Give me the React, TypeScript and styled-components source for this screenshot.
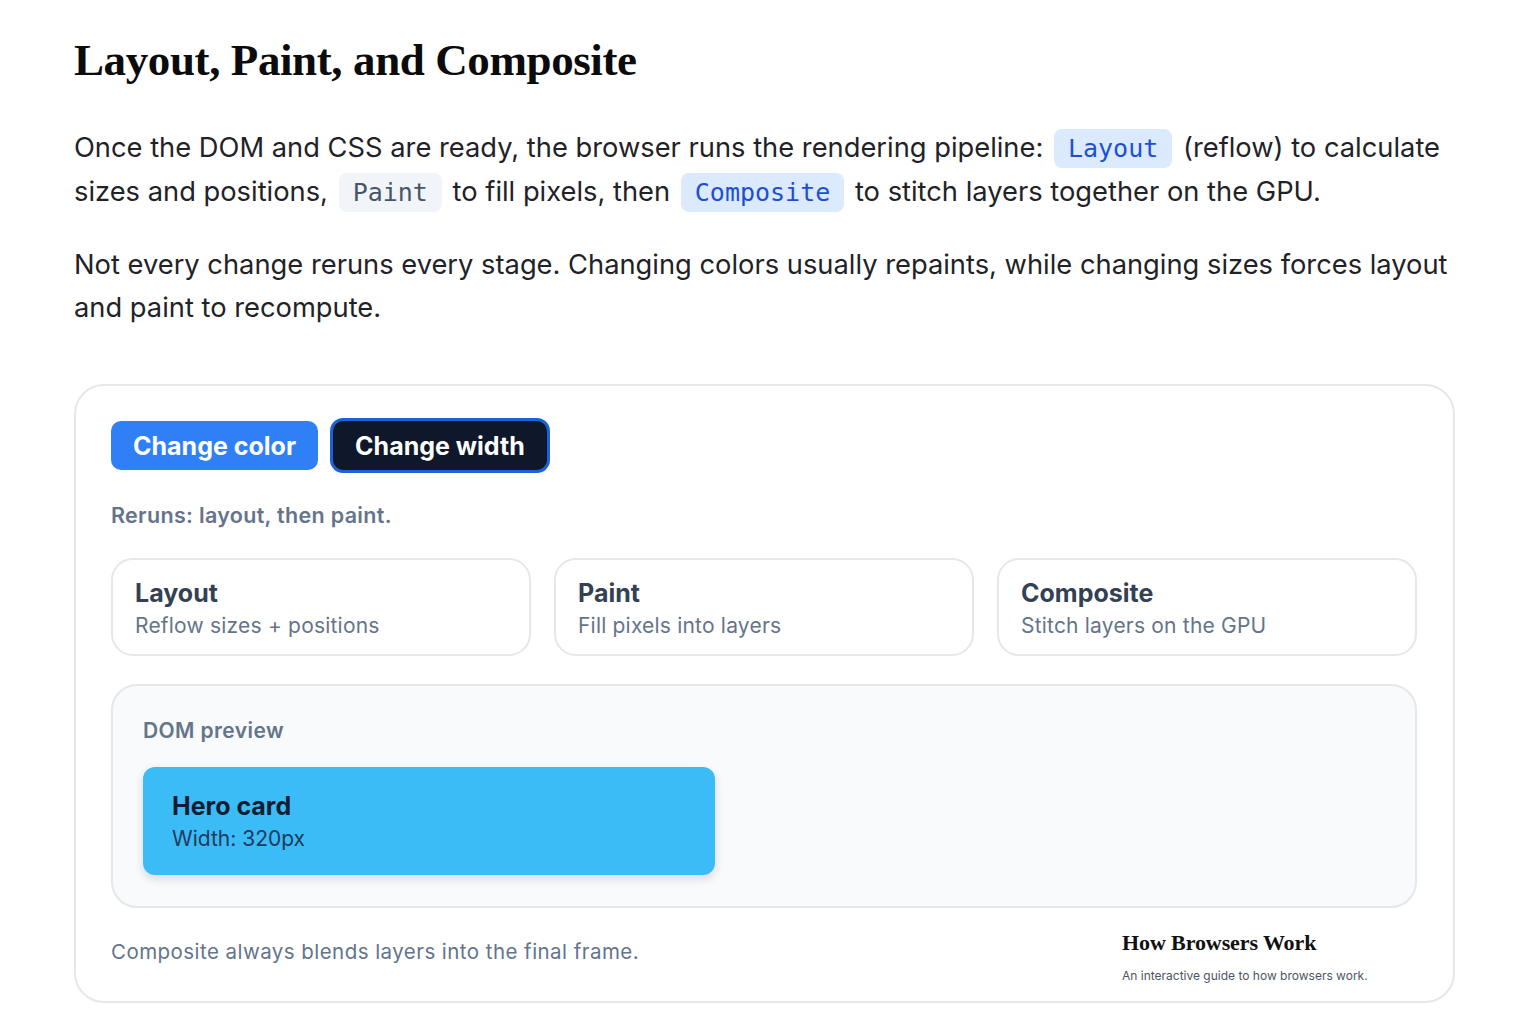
import React from "react";
import styled, { createGlobalStyle } from "styled-components";

const Global = createGlobalStyle`
  html, body { margin: 0; padding: 0; background: #ffffff; }
  body { font-family: Inter, "Noto Sans", sans-serif; color: #111827; }
`;

const Page = styled.main`
  width: 1381px;
  padding: 28px 0 0 74px;
`;

const Title = styled.h1`
  margin: 0 0 34px 0;
  font-family: "Liberation Serif", "DejaVu Serif", serif;
  font-weight: 700;
  font-size: 45px;
  line-height: 64px;
  letter-spacing: -0.4px;
  color: #0b0b0b;
`;

const Para = styled.p`
  margin: 0 0 29px 0;
  font-size: 27.3px;
  line-height: 43px;
  color: #1f2328;
`;

const Code = styled.code<{ $tone: "blue" | "gray" }>`
  font-family: "DejaVu Sans Mono", "Liberation Mono", monospace;
  font-size: 25px;
  padding: 5px 14px;
  margin: 0 3px;
  border-radius: 8px;
  background: ${(p) => (p.$tone === "blue" ? "#dbeafe" : "#f1f5f9")};
  color: ${(p) => (p.$tone === "blue" ? "#1d4ed8" : "#475569")};
`;

const Card = styled.section`
  margin-top: 55px;
  border: 2px solid #e5e7eb;
  border-radius: 30px;
  padding: 35px 36px 17px 35px;
  display: flex;
  flex-direction: column;
`;

const ButtonRow = styled.div`
  display: flex;
  gap: 15px;
  align-items: center;
`;

const Button = styled.button<{ $active?: boolean }>`
  font-family: Inter, sans-serif;
  font-weight: 700;
  font-size: 25px;
  height: 49px;
  padding: 0 22px;
  border-radius: 10px;
  border: none;
  color: #ffffff;
  background: ${(p) => (p.$active ? "#0f172a" : "#2f80f7")};
  box-shadow: ${(p) => (p.$active ? "0 0 0 3px #1d63d8" : "none")};
  cursor: pointer;
`;

const Status = styled.div`
  margin-top: 31px;
  font-size: 21.5px;
  font-weight: 600;
  letter-spacing: 0.32px;
  color: #64748b;
  line-height: 28px;
`;

const Stages = styled.div`
  margin-top: 29px;
  display: grid;
  grid-template-columns: repeat(3, 1fr);
  gap: 23px;
`;

const Stage = styled.div`
  border: 2px solid #e5e7eb;
  border-radius: 22px;
  padding: 17px 22px 13px;
  display: flex;
  flex-direction: column;
  gap: 2px;
`;

const StageTitle = styled.div`
  font-size: 25px;
  font-weight: 700;
  color: #334155;
  line-height: 32px;
`;

const StageSub = styled.div`
  font-size: 21px;
  color: #64748b;
  line-height: 30px;
  letter-spacing: 0.2px;
`;

const Preview = styled.div`
  margin-top: 28px;
  background: #f8fafc;
  border: 2px solid #e5e7eb;
  border-radius: 26px;
  padding: 28px 30px 31px;
  display: flex;
  flex-direction: column;
  align-items: flex-start;
`;

const PreviewLabel = styled.div`
  font-size: 21px;
  font-weight: 600;
  letter-spacing: 0.4px;
  color: #64748b;
  line-height: 34px;
`;

const Hero = styled.div`
  margin-top: 19px;
  width: 572px;
  height: 108px;
  box-sizing: border-box;
  background: #3bbcf6;
  border-radius: 12px;
  padding: 23px 29px;
  box-shadow: 0 4px 10px rgba(15, 23, 42, 0.14);
`;

const HeroTitle = styled.div`
  font-size: 25px;
  font-weight: 700;
  color: #0f1d33;
  line-height: 33px;
`;

const HeroSub = styled.div`
  font-size: 21px;
  color: #1e3a5f;
  line-height: 32px;
`;

const Footer = styled.div`
  margin-top: 22px;
  display: flex;
  justify-content: space-between;
  align-items: flex-start;
`;

const Note = styled.div`
  margin-top: 7px;
  font-size: 20.5px;
  color: #64748b;
  line-height: 30px;
  letter-spacing: 0.45px;
`;

const Brand = styled.div`
  width: 295px;
  display: flex;
  flex-direction: column;
  gap: 12px;
`;

const BrandName = styled.div`
  font-family: "Liberation Serif", "DejaVu Serif", serif;
  font-weight: 700;
  font-size: 22px;
  color: #111111;
  letter-spacing: -0.1px;
  line-height: 26px;
`;

const BrandTag = styled.div`
  font-size: 12px;
  color: #4b5563;
  line-height: 16px;
`;

export default function App() {
  return (
    <>
      <Global />
      <Page>
        <Title>Layout, Paint, and Composite</Title>
        <Para>
          Once the DOM and CSS are ready, the browser runs the rendering pipeline:{" "}
          <Code $tone="blue">Layout</Code> (reflow) to calculate sizes and positions,{" "}
          <Code $tone="gray">Paint</Code> to fill pixels, then{" "}
          <Code $tone="blue">Composite</Code> to stitch layers together on the GPU.
        </Para>
        <Para>
          Not every change reruns every stage. Changing colors usually repaints, while changing
          sizes forces layout and paint to recompute.
        </Para>
        <Card>
          <ButtonRow>
            <Button>Change color</Button>
            <Button $active>Change width</Button>
          </ButtonRow>
          <Status>Reruns: layout, then paint.</Status>
          <Stages>
            <Stage>
              <StageTitle>Layout</StageTitle>
              <StageSub>Reflow sizes + positions</StageSub>
            </Stage>
            <Stage>
              <StageTitle>Paint</StageTitle>
              <StageSub>Fill pixels into layers</StageSub>
            </Stage>
            <Stage>
              <StageTitle>Composite</StageTitle>
              <StageSub>Stitch layers on the GPU</StageSub>
            </Stage>
          </Stages>
          <Preview>
            <PreviewLabel>DOM preview</PreviewLabel>
            <Hero>
              <HeroTitle>Hero card</HeroTitle>
              <HeroSub>Width: 320px</HeroSub>
            </Hero>
          </Preview>
          <Footer>
            <Note>Composite always blends layers into the final frame.</Note>
            <Brand>
              <BrandName>How Browsers Work</BrandName>
              <BrandTag>An interactive guide to how browsers work.</BrandTag>
            </Brand>
          </Footer>
        </Card>
      </Page>
    </>
  );
}
